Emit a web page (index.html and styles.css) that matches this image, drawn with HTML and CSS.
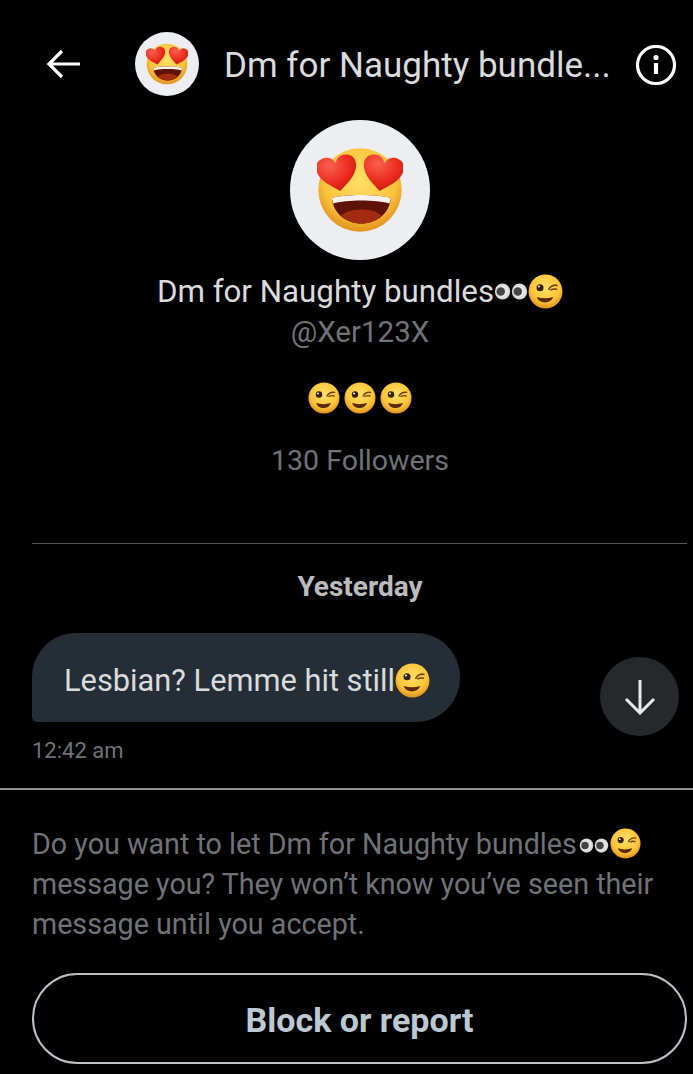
FILE: index.html
```html
<!DOCTYPE html>
<html lang="en">
<head>
    <title>Message request</title>
    <link rel="stylesheet" href="styles.css">
</head>
<body>
    <svg class="defs" width="0" height="0">
        <defs>
            <radialGradient id="faceFill" cx="50%" cy="38%" r="65%">
                <stop offset="0%" stop-color="#ffdf66"/>
                <stop offset="65%" stop-color="#fbc53a"/>
                <stop offset="100%" stop-color="#dd8a1a"/>
            </radialGradient>
            <radialGradient id="heartFill" cx="35%" cy="25%" r="85%">
                <stop offset="0%" stop-color="#f9604f"/>
                <stop offset="60%" stop-color="#ea2a1c"/>
                <stop offset="100%" stop-color="#bd1a10"/>
            </radialGradient>
            <radialGradient id="eyeFill" cx="50%" cy="50%" r="55%">
                <stop offset="0%" stop-color="#ffffff"/>
                <stop offset="100%" stop-color="#cfcfcf"/>
            </radialGradient>
            <path id="heartShape" d="M0 14C-6 9-15 4-15-5-15-11-9-13-5-12-2-11-1-9 0-7 1-9 2-11 5-12 9-13 15-11 15-5 15 4 6 9 0 14z"/>
            <symbol id="hearts" viewBox="0 0 64 64">
                <circle cx="32" cy="32" r="31" fill="url(#faceFill)"/>
                <path d="M11 38c10-3 34-3 44 0-1 11-10 19-22 19S12 49 11 38z" fill="#5f1207"/>
                <path d="M18 51c6-6 24-6 30 0-4 4-9 6-15 6s-11-2-15-6z" fill="#a32c10"/>
                <path d="M11 38c10-3 34-3 44 0l-1 4c-10-3-32-3-42 0z" fill="#f4f1ec"/>
                <use href="#heartShape" fill="url(#heartFill)" transform="translate(15 19) rotate(-10)"/>
                <use href="#heartShape" fill="url(#heartFill)" transform="translate(49 19) rotate(10)"/>
            </symbol>
            <symbol id="wink" viewBox="0 0 32 32">
                <circle cx="16" cy="16" r="15.5" fill="url(#faceFill)"/>
                <circle cx="11" cy="12.5" r="3.2" fill="#33200e"/>
                <circle cx="10" cy="11.5" r="0.9" fill="#fff"/>
                <path d="M19 14c1.500-3 5-4.500 7.500-3.500M21 14.500c1.500-1 3.500-1 5-.5" fill="none" stroke="#6d4312" stroke-width="1.4" stroke-linecap="round"/>
                <path d="M8 21c5 1.500 10 1.500 15 0-1 3-4 5-7.500 5S9 24 8 21z" fill="#5e2a0c"/>
            </symbol>
            <symbol id="eyes" viewBox="0 0 40 20">
                <ellipse cx="10" cy="10" rx="9" ry="9.5" fill="url(#eyeFill)"/>
                <ellipse cx="30" cy="10" rx="9" ry="9.5" fill="url(#eyeFill)"/>
                <circle cx="8" cy="10" r="5" fill="#444"/>
                <circle cx="28" cy="10" r="5" fill="#444"/>
            </symbol>
        </defs>
    </svg>

    <div class="screen">
        <header class="top-bar">
            <svg class="back-icon" viewBox="0 0 36 30">
                <path d="M34 15H3M16 2 3 15l13 13" fill="none" stroke="#fff" stroke-width="3.2"/>
            </svg>
            <div class="avatar-small">
                <svg class="avatar-small-face"><use href="#hearts"/></svg>
            </div>
            <div class="top-title">Dm for Naughty bundle...</div>
            <svg class="info-icon" viewBox="0 0 40 40">
                <circle cx="20" cy="20" r="18.5" fill="none" stroke="#fff" stroke-width="3.2"/>
                <circle cx="20" cy="12.5" r="2.6" fill="#fff"/>
                <path d="M20 18v11" stroke="#fff" stroke-width="4.2" fill="none"/>
            </svg>
        </header>

        <section class="profile">
            <div class="avatar-large">
                <svg class="avatar-large-face"><use href="#hearts"/></svg>
            </div>
            <div class="profile-name">Dm for Naughty bundles<svg class="eyes"><use href="#eyes"/></svg><svg class="wink"><use href="#wink"/></svg></div>
            <div class="profile-handle">@Xer123X</div>
            <div class="profile-bio">
                <svg class="wink-bio"><use href="#wink"/></svg>
                <svg class="wink-bio"><use href="#wink"/></svg>
                <svg class="wink-bio"><use href="#wink"/></svg>
            </div>
            <div class="profile-followers">130 Followers</div>
        </section>

        <div class="divider"></div>
        <div class="day-label">Yesterday</div>

        <div class="message-row">
            <div class="bubble">Lesbian? Lemme hit still<svg class="wink"><use href="#wink"/></svg></div>
            <button class="scroll-down">
                <svg viewBox="0 0 32 36">
                    <path d="M16 1v33M2 20l14 14 14-14" fill="none" stroke="#e7e9ea" stroke-width="3"/>
                </svg>
            </button>
        </div>
        <div class="message-time">12:42 am</div>

        <footer class="request">
            <p class="request-text">Do you want to let Dm for Naughty bundles<svg class="eyes eyes-small"><use href="#eyes"/></svg><svg class="wink wink-small"><use href="#wink"/></svg><br>message you? They won’t know you’ve seen their<br>message until you accept.</p>
            <button class="block-btn">Block or report</button>
        </footer>
    </div>
</body>
</html>
```

FILE: styles.css
```css
:root {
    --muted: #6f7377;
    --text: #d9dbdc;
}

* {
    margin: 0;
    padding: 0;
    box-sizing: border-box;
}

body {
    background-color: #000;
    color: var(--text);
    font-family: 'Roboto', sans-serif;
    overflow: hidden;
}

.defs {
    display: block;
    height: 0;
}

.screen {
    width: 693px;
    height: 1074px;
    overflow: hidden;
}

.top-bar {
    display: flex;
    align-items: center;
    height: 64px;
    margin-top: 32px;
    padding-left: 46px;
}

.back-icon {
    width: 36px;
    height: 30px;
    flex-shrink: 0;
}

.avatar-small {
    width: 64px;
    height: 64px;
    margin-left: 53px;
    border-radius: 50%;
    background-color: #eceef1;
    display: flex;
    align-items: center;
    justify-content: center;
    flex-shrink: 0;
}

.avatar-small-face {
    width: 42px;
    height: 42px;
}

.top-title {
    margin-left: 25px;
    padding-top: 3px;
    width: 412px;
    font-size: 35px;
    white-space: nowrap;
}

.info-icon {
    width: 40px;
    height: 40px;
    margin-top: 2px;
    flex-shrink: 0;
}

.profile {
    display: flex;
    flex-direction: column;
    align-items: center;
    width: 720px;
    padding-top: 24px;
}

.avatar-large {
    width: 140px;
    height: 140px;
    border-radius: 50%;
    background-color: #eceef1;
    display: flex;
    align-items: center;
    justify-content: center;
}

.avatar-large-face {
    width: 86px;
    height: 86px;
}

.profile-name {
    display: flex;
    align-items: center;
    margin-top: 12px;
    height: 38px;
    font-size: 31.3px;
}

.profile-handle {
    margin-top: 4px;
    height: 36px;
    line-height: 36px;
    font-size: 29.5px;
    color: var(--muted);
}

.profile-bio {
    display: flex;
    gap: 4px;
    margin-top: 32px;
}

.wink-bio {
    width: 32px;
    height: 32px;
}

.profile-followers {
    margin-top: 29px;
    height: 36px;
    line-height: 36px;
    font-size: 28.5px;
    color: var(--muted);
}

.eyes {
    width: 34px;
    height: 17px;
    flex-shrink: 0;
    vertical-align: 1px;
}

.wink {
    width: 35px;
    height: 35px;
    flex-shrink: 0;
    vertical-align: -5px;
}

.eyes-small {
    width: 30px;
    height: 15px;
    margin-left: 2px;
}

.wink-small {
    width: 31px;
    height: 31px;
    margin-left: 1px;
}

.divider {
    height: 1px;
    margin: 64px 6px 0 32px;
    background-color: #55585b;
}

.day-label {
    width: 720px;
    margin-top: 27px;
    height: 32px;
    line-height: 32px;
    text-align: center;
    font-size: 28px;
    font-weight: 700;
    color: #b9bbbd;
}

.message-row {
    display: flex;
    justify-content: space-between;
    padding: 30px 14px 0 32px;
}

.bubble {
    display: flex;
    align-items: center;
    width: 428px;
    height: 89px;
    padding-left: 32px;
    padding-top: 5px;
    background-color: #252e36;
    border-radius: 44px 44px 44px 5px;
    font-size: 30.8px;
}

.scroll-down {
    width: 79px;
    height: 79px;
    margin-top: 24px;
    border: none;
    border-radius: 50%;
    background-color: #26292c;
    display: flex;
    align-items: center;
    justify-content: center;
}

.scroll-down svg {
    width: 32px;
    height: 36px;
}

.message-time {
    margin-top: 1px;
    padding-left: 32px;
    height: 28px;
    line-height: 28px;
    font-size: 22px;
    color: var(--muted);
}

.request {
    margin-top: 23px;
    border-top: 2px solid #8b8e91;
    padding: 34px 6px 0 32px;
}

.request-text {
    font-size: 28.7px;
    line-height: 40px;
    color: var(--muted);
    white-space: nowrap;
}

.block-btn {
    display: block;
    width: 100%;
    height: 91px;
    margin-top: 29px;
    padding-top: 3px;
    border: 2px solid #bcc1c5;
    border-radius: 46px;
    background: transparent;
    font-family: 'Roboto', sans-serif;
    font-size: 34px;
    font-weight: 700;
    color: #bdc9d2;
}
```
